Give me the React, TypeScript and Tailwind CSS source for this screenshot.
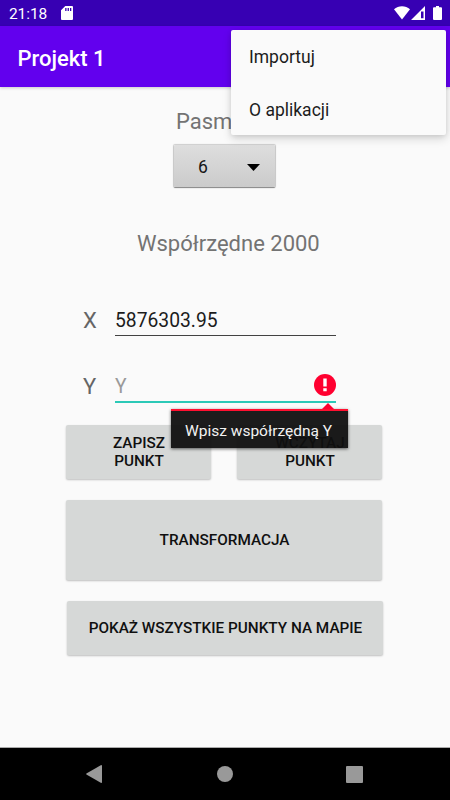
import type { ReactNode } from "react";

function StatusBar() {
  return (
    <header className="flex h-[26px] items-center bg-[#3700b3] pl-[9px] pr-2 text-white">
      <span className="w-[39px] pt-[2px] text-[15.5px] leading-[26px] tracking-[-0.1px] text-white">21:18</span>
      <svg className="ml-[13px] h-[14px] w-3" viewBox="0 0 12 14" fill="currentColor">
        <path
          fillRule="evenodd"
          d="M4.3 0H11a1 1 0 0 1 1 1v12a1 1 0 0 1-1 1H1a1 1 0 0 1-1-1V4.3zM4.2 2v3h1.3V2zM6.6 2v3h1.3V2zM9 2v3h1.3V2z"
        />
      </svg>
      <div className="ml-auto flex items-center">
        <svg className="h-[14px] w-4" viewBox="0 0 16 14" fill="currentColor">
          <path d="M0 3.2C4.4-.9 11.6-.9 16 3.2L8 13.4z" />
        </svg>
        <svg className="ml-px h-[14px] w-[14px]" viewBox="0 0 14 14" fill="currentColor">
          <path fillRule="evenodd" d="M14 0v14H0zM10 5.5v6.8h2.5V5.5z" />
        </svg>
        <svg className="ml-2 h-[14px] w-[9px]" viewBox="0 0 9 14" fill="currentColor">
          <path d="M3 0h3v1.3h2a1 1 0 0 1 1 1V13a1 1 0 0 1-1 1H1a1 1 0 0 1-1-1V2.3a1 1 0 0 1 1-1h2z" />
        </svg>
      </div>
    </header>
  );
}

function OverflowMenu() {
  return (
    <div className="absolute left-[231px] top-[30px] z-20 flex h-[105px] w-[215px] flex-col rounded-[2px] bg-[#fafafa] pl-[18px] text-[17.5px] text-[#1c1c1c] shadow-[0_4px_10px_rgba(0,0,0,0.14),0_1px_5px_rgba(0,0,0,0.1)]">
      <span className="flex h-[53px] items-center pt-0.5">Importuj</span>
      <span className="flex h-[52px] items-center pt-0.5">O aplikacji</span>
    </div>
  );
}

function ActionButton({ className, children }: { className: string; children: ReactNode }) {
  return (
    <button
      className={`flex items-center justify-center rounded-[2px] bg-[#d6d8d7] pl-px text-center text-[15.3px] font-medium leading-[18px] text-[#101010] shadow-[0_1px_2px_rgba(0,0,0,0.24)] ${className}`}
    >
      {children}
    </button>
  );
}

function ErrorPopup() {
  return (
    <div className="absolute left-[171px] top-[403px] z-10 w-[177px]">
      <svg className="ml-[151px] block h-[6px] w-3" viewBox="0 0 12 6">
        <path d="M6 0L12 6H0z" fill="#ff0030" />
      </svg>
      <div className="h-[39px] border-t-2 border-[#ff1030] bg-[#101010]/95 pl-[14px] text-[15.5px] leading-[41px] text-[#f2f2f2] shadow-[0_1px_3px_rgba(0,0,0,0.6)]">
        Wpisz współrzędną Y
      </div>
    </div>
  );
}

export default function App() {
  return (
    <div className="relative flex h-[800px] w-[450px] flex-col overflow-hidden bg-[#fafafa] font-[Roboto,sans-serif]">
      <StatusBar />
      <div className="flex h-[61px] items-center bg-[#6200ee] pl-[17.5px] pt-[3px] text-[22px] font-medium text-white shadow-[0_1px_3px_rgba(0,0,0,0.2)]">
        Projekt 1
      </div>

      <main className="flex flex-1 flex-col">
        <div className="mt-[22px] pl-[176px] text-[22px] leading-[26px] text-[#737373]">Pasmo</div>
        <div className="ml-[174px] mt-[10px] flex h-[42px] w-[101px] items-center rounded-[1px] bg-linear-to-b from-[#dedede] to-[#cbcbcb] pl-6 pr-[15px] pt-[2px] text-[17.5px] text-[#161616] shadow-[0_0_1px_1px_rgba(0,0,0,0.18),0_1px_1px_rgba(0,0,0,0.35)]">
          6
          <svg className="ml-auto h-[7px] w-[13px]" viewBox="0 0 13 7">
            <path d="M0 0H13L6.5 7z" />
          </svg>
        </div>
        <div className="mt-[44px] pl-[137px] text-[22px] leading-[26px] text-[#737373]">Współrzędne 2000</div>

        <div className="mt-[47px] flex h-[32px] pl-[83px] pr-[114px]">
          <span className="w-8 text-[22px] leading-[34px] text-[#656565]">X</span>
          <div className="flex-1 border-b border-[#424242] text-[19.3px] leading-[34px] text-[#1c1c1c]">5876303.95</div>
        </div>
        <div className="mt-[33px] flex h-[34px] pl-[83px] pr-[114px]">
          <span className="w-8 text-[22px] leading-[36px] text-[#656565]">Y</span>
          <div className="flex flex-1 items-start justify-between border-b-2 border-[#2cc9b7] text-[19.3px] leading-[36px] text-[#999]">
            Y
            <svg className="mt-[5px] h-[22px] w-[22px]" viewBox="0 0 22 22">
              <circle cx="11" cy="11" r="11" fill="#ff0030" />
              <path d="M9.3 4.500h3.400v8H9.300zM9.300 14.200h3.400v3H9.300z" fill="white" />
            </svg>
          </div>
        </div>

        <div className="mt-[22px] flex gap-[26px] pl-[66px]">
          <ActionButton className="h-[54px] w-[145px]">
            ZAPISZ
            <br />
            PUNKT
          </ActionButton>
          <ActionButton className="h-[54px] w-[145px]">
            WCZYTAJ
            <br />
            PUNKT
          </ActionButton>
        </div>
        <ActionButton className="ml-[66px] mt-[21px] h-[80px] w-[316px]">TRANSFORMACJA</ActionButton>
        <ActionButton className="ml-[67px] mt-[21px] h-[54px] w-[316px]">POKAŻ WSZYSTKIE PUNKTY NA MAPIE</ActionButton>
      </main>

      <nav className="flex h-[53px] items-center border-t border-[#aaa] bg-black pl-[86px] pr-[87px] text-[#999]">
        <svg className="h-[18px] w-4" viewBox="0 0 16 18" fill="currentColor">
          <path d="M15.200 0Q16 0 16 .8V17.200Q16 18 15.200 18L.4 9.500Q0 9 .4 8.500z" />
        </svg>
        <span className="ml-[115px] h-4 w-4 rounded-full bg-[#999]" />
        <span className="ml-auto h-[17px] w-[17px] rounded-[1px] bg-[#999]" />
      </nav>
      <OverflowMenu />
      <ErrorPopup />
    </div>
  );
}
